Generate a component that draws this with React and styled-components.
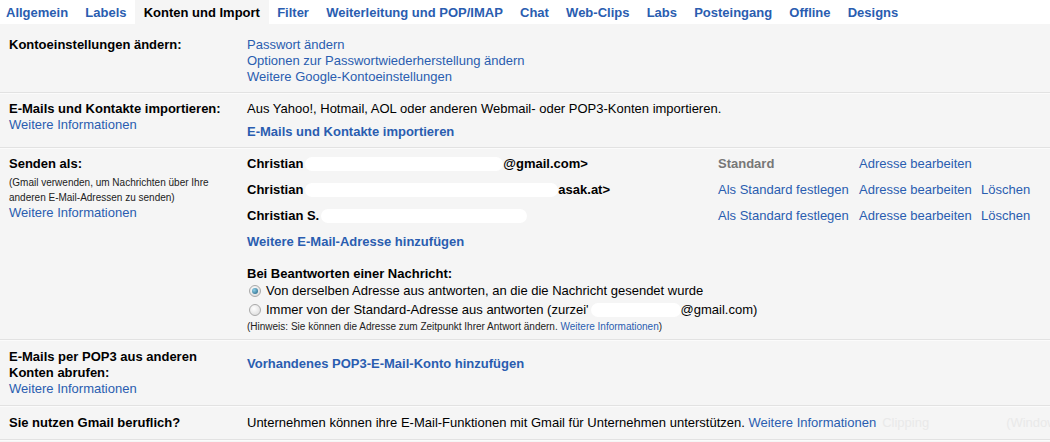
import React from 'react';
import styled, { createGlobalStyle } from 'styled-components';

const GlobalStyle = createGlobalStyle`
  html, body {
    margin: 0;
    padding: 0;
    background: #f5f5f5;
    font-family: Arial, "Liberation Sans", sans-serif;
    font-size: 13px;
    color: #000;
  }
`;

const Page = styled.div`
  width: 1050px;
  height: 442px;
  overflow: hidden;
  background: #f5f5f5;
`;

const TabBar = styled.div`
  display: flex;
  height: 24px;
  background: #fff;
`;

const Tab = styled.div`
  display: flex;
  align-items: center;
  padding: 1px 8.6px 0 ${(p) => (p.$first ? 6 : 8.6)}px;
  font-weight: bold;
  font-size: 13px;
  color: ${(p) => (p.$active ? '#000' : '#2a5db0')};
  background: ${(p) => (p.$active ? '#f5f5f5' : 'transparent')};
  white-space: nowrap;
`;

const Row = styled.div`
  display: grid;
  grid-template-columns: 238px 1fr;
  padding: ${(p) => p.$pad || '12px 0 12px 9px'};
  border-bottom: 1px solid #e2e2e2;
  box-shadow: 0 1px 0 #fbfbfb;
`;

const LabelCol = styled.div`
  line-height: 16px;
`;

const Label = styled.div`
  font-weight: bold;
`;

const Small = styled.div`
  font-size: 10px;
  line-height: 15px;
  color: #222;
  ${(p) => p.$first && 'margin-top: 3px;'}
`;

const Link = styled.a`
  display: block;
  color: #2a5db0;
  text-decoration: none;
  line-height: 16px;
  cursor: pointer;
`;

const BoldLink = styled(Link)`
  font-weight: bold;
  margin-top: ${(p) => p.$mt || 0}px;
`;

const InlineLink = styled.a`
  color: #2a5db0;
  text-decoration: none;
`;

const Content = styled.div`
  line-height: 16px;
`;

const SenderRow = styled.div`
  display: grid;
  grid-template-columns: 471px 141px 122px auto;
  height: 26px;
  align-items: start;
  line-height: 16px;
`;

const Sender = styled.div`
  font-weight: bold;
  display: flex;
  align-items: center;
  white-space: nowrap;
`;

const Blot = styled.span`
  display: inline-block;
  vertical-align: middle;
  width: ${(p) => p.$w}px;
  height: 14px;
  background: #fff;
  border-radius: 8px;
  margin: 0 0 0 2px;
`;

const Muted = styled.span`
  font-weight: bold;
  color: #777;
`;

const Heading = styled.div`
  font-weight: bold;
  margin-top: 16px;
  line-height: 16px;
`;

const RadioLine = styled.label`
  display: flex;
  align-items: center;
  height: ${(p) => p.$h || 18}px;
  gap: 5px;
  padding-left: 2px;
  white-space: nowrap;
`;

const Radio = styled.span`
  width: 12px;
  height: 12px;
  border-radius: 50%;
  box-sizing: border-box;
  border: 1px solid #a9a9a9;
  background: radial-gradient(circle at 40% 35%, #fff, #d6d6d6);
  display: inline-flex;
  align-items: center;
  justify-content: center;
  &::after {
    content: '';
    display: ${(p) => (p.$checked ? 'block' : 'none')};
    width: 6px;
    height: 6px;
    border-radius: 50%;
    background: radial-gradient(circle at 35% 35%, #8fd0e8, #1d5e7e);
  }
`;

const Hint = styled.div`
  font-size: 10px;
  line-height: 14px;
  margin-top: 1px;
  color: #222;
`;

const BusinessText = styled.div`
  display: flex;
  white-space: nowrap;
`;

const Ghost = styled.span`
  color: #e9e9e9;
  margin-left: ${(p) => p.$ml}px;
`;

const tabs = [
  'Allgemein',
  'Labels',
  'Konten und Import',
  'Filter',
  'Weiterleitung und POP/IMAP',
  'Chat',
  'Web-Clips',
  'Labs',
  'Posteingang',
  'Offline',
  'Designs',
];

const senders = [
  { name: 'Christian', blot: 198, tail: '@gmail.com>', std: true, del: false },
  { name: 'Christian', blot: 253, tail: 'asak.at>', std: false, del: true },
  { name: 'Christian S.', blot: 206, tail: '', std: false, del: true },
];

export default function App() {
  return (
    <Page>
      <GlobalStyle />
      <TabBar>
        {tabs.map((t, i) => (
          <Tab key={t} $first={i === 0} $active={t === 'Konten und Import'}>
            {t}
          </Tab>
        ))}
      </TabBar>

      <Row $pad="13px 0 7px 9px">
        <LabelCol>
          <Label>Kontoeinstellungen ändern:</Label>
        </LabelCol>
        <Content>
          <Link>Passwort ändern</Link>
          <Link>Optionen zur Passwortwiederherstellung ändern</Link>
          <Link>Weitere Google-Kontoeinstellungen</Link>
        </Content>
      </Row>

      <Row $pad="8px 0 7px 9px">
        <LabelCol>
          <Label>E-Mails und Kontakte importieren:</Label>
          <Link>Weitere Informationen</Link>
        </LabelCol>
        <Content>
          <div>Aus Yahoo!, Hotmail, AOL oder anderen Webmail- oder POP3-Konten importieren.</div>
          <BoldLink $mt={7}>E-Mails und Kontakte importieren</BoldLink>
        </Content>
      </Row>

      <Row $pad="8px 0 5px 9px">
        <LabelCol>
          <Label>Senden als:</Label>
          <Small $first>(Gmail verwenden, um Nachrichten über Ihre</Small>
          <Small>anderen E-Mail-Adressen zu senden)</Small>
          <Link>Weitere Informationen</Link>
        </LabelCol>
        <Content>
          {senders.map((s, i) => (
            <SenderRow key={i}>
              <Sender>
                {s.name}
                <Blot $w={s.blot} />
                {s.tail}
              </Sender>
              <div>{s.std ? <Muted>Standard</Muted> : <InlineLink>Als Standard festlegen</InlineLink>}</div>
              <div>
                <InlineLink>Adresse bearbeiten</InlineLink>
              </div>
              <div>{s.del && <InlineLink>Löschen</InlineLink>}</div>
            </SenderRow>
          ))}
          <BoldLink>Weitere E-Mail-Adresse hinzufügen</BoldLink>
          <Heading>Bei Beantworten einer Nachricht:</Heading>
          <RadioLine $h={18}>
            <Radio $checked />
            Von derselben Adresse aus antworten, an die die Nachricht gesendet wurde
          </RadioLine>
          <RadioLine $h={19}>
            <Radio />
            <span>
              Immer von der Standard-Adresse aus antworten (zurzei'
              <Blot $w={90} />
              @gmail.com)
            </span>
          </RadioLine>
          <Hint>
            (Hinweis: Sie können die Adresse zum Zeitpunkt Ihrer Antwort ändern.{' '}
            <InlineLink>Weitere Informationen</InlineLink>)
          </Hint>
        </Content>
      </Row>

      <Row $pad="9px 0 8px 9px">
        <LabelCol>
          <Label>E-Mails per POP3 aus anderen</Label>
          <Label>Konten abrufen:</Label>
          <Link>Weitere Informationen</Link>
        </LabelCol>
        <Content>
          <BoldLink $mt={7}>Vorhandenes POP3-E-Mail-Konto hinzufügen</BoldLink>
        </Content>
      </Row>

      <Row $pad="9px 0 8px 9px">
        <LabelCol>
          <Label>Sie nutzen Gmail beruflich?</Label>
        </LabelCol>
        <BusinessText>
          Unternehmen können ihre E-Mail-Funktionen mit Gmail für Unternehmen unterstützen.&nbsp;
          <InlineLink>Weitere Informationen</InlineLink>
          <Ghost $ml={6}>Clipping</Ghost>
          <Ghost $ml={77}>(Window</Ghost>
        </BusinessText>
      </Row>
    </Page>
  );
}
